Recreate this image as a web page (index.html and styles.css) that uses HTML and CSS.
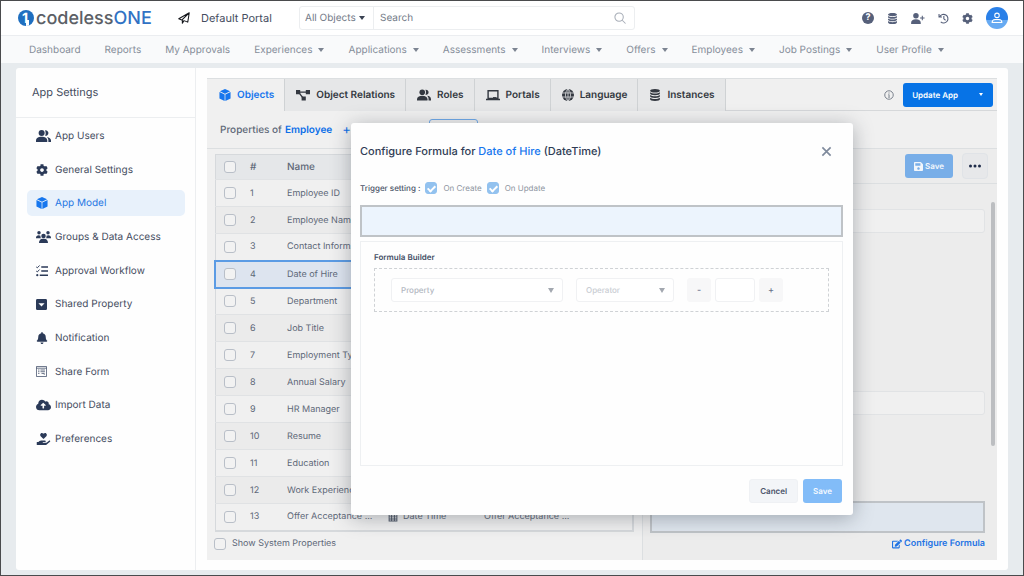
FILE: index.html
```html
<!DOCTYPE html>
<html lang="en">
<head>
    <meta charset="UTF-8">
    <meta name="viewport" content="width=device-width, initial-scale=1.0">
    <title>App Settings - Default Portal</title>
    <link rel="stylesheet" href="styles.css">
</head>
<body>
    <!-- Icon sprite -->
    <svg class="sprite" aria-hidden="true">
        <symbol id="i-users" viewBox="0 0 20 16">
            <circle cx="7.5" cy="4" r="4"/>
            <path d="M0 16v-2c0-3 3-5 7.500-5s7.500 2 7.500 5v2z"/>
            <path d="M12 .5a3.700 3.700 0 1 1 0 7.200c1.200-2 1.200-5 0-7.200zM14.500 9.200c3.300.3 5.500 2.200 5.500 4.800v2h-3.500v-2c0-2-.7-3.500-2-4.800z"/>
        </symbol>
        <symbol id="i-cog" viewBox="0 0 512 512"><path d="M487.4 315.7l-42.6-24.6c4.3-23.2 4.3-47 0-70.2l42.6-24.6c4.9-2.8 7.1-8.6 5.5-14-11.1-35.6-30-67.8-54.7-94.6-3.8-4.1-10-5.1-14.8-2.3L380.8 110c-17.9-15.4-38.5-27.3-60.8-35.1V25.800c0-5.600-3.900-10.500-9.400-11.700-36.7-8.200-74.300-7.800-109.200 0-5.500 1.200-9.400 6.100-9.400 11.700V75c-22.200 7.900-42.800 19.800-60.800 35.100L88.700 85.500c-4.900-2.800-11-1.900-14.800 2.300-24.700 26.700-43.600 58.900-54.700 94.600-1.700 5.400.6 11.200 5.500 14L67.300 221c-4.300 23.200-4.300 47 0 70.200l-42.600 24.600c-4.900 2.800-7.100 8.600-5.500 14 11.100 35.600 30 67.800 54.700 94.600 3.800 4.100 10 5.100 14.800 2.300l42.600-24.600c17.900 15.400 38.500 27.300 60.800 35.100v49.200c0 5.600 3.900 10.500 9.400 11.700 36.700 8.200 74.300 7.800 109.200 0 5.500-1.200 9.400-6.100 9.400-11.700v-49.200c22.200-7.900 42.800-19.800 60.800-35.100l42.600 24.600c4.900 2.800 11 1.900 14.800-2.300 24.700-26.700 43.600-58.900 54.700-94.600 1.500-5.500-.7-11.300-5.600-14.100zM256 336c-44.100 0-80-35.900-80-80s35.900-80 80-80 80 35.900 80 80-35.900 80-80 80z"/></symbol>
        <symbol id="i-cube" viewBox="0 0 16 16"><path d="M8 0l6.800 3L8 6.300 1.200 3zM.6 4l6.900 3.300V16L.6 12.500zM15.400 4L8.500 7.300V16l6.900-3.500z"/></symbol>
        <symbol id="i-group" viewBox="0 0 20 16">
            <circle cx="4" cy="2.300" r="2.300"/><circle cx="16" cy="2.300" r="2.300"/><circle cx="10" cy="6.500" r="3"/>
            <path d="M0 9c0-2 1.500-3.500 3.500-3.500 1 0 2 .3 2.500.8-.3 1.200 0 2.200.6 3.200H0zM20 9c0-2-1.500-3.500-3.500-3.500-1 0-2 .3-2.500.8.3 1.200 0 2.200-.6 3.200H20zM4 16c0-3.500 2-5.700 4.500-5.700h3c2.500 0 4.500 2.200 4.500 5.700z"/>
        </symbol>
        <symbol id="i-tasks" viewBox="0 0 16 16">
            <path d="M7 1.500h9v2H7zM7 7h9v2H7zM5 12.500h11v2H5z"/>
            <circle cx="1.700" cy="13.500" r="1.500"/>
            <path d="M.3 2.500l1.400 1.300L4.800.6M.3 8l1.400 1.300L4.800 6" fill="none" stroke="currentColor" stroke-width="1.300"/>
        </symbol>
        <symbol id="i-shared" viewBox="0 0 16 16"><path fill-rule="evenodd" d="M2 0h12a2 2 0 0 1 2 2v12a2 2 0 0 1-2 2H2a2 2 0 0 1-2-2V2a2 2 0 0 1 2-2zm1.500 6L8 11l4.500-5z"/></symbol>
        <symbol id="i-bell" viewBox="0 0 448 512"><path d="M224 512c35.320 0 63.970-28.650 63.970-64H160.030c0 35.350 28.650 64 63.970 64zm215.390-149.710c-19.320-20.760-55.470-51.990-55.470-154.290 0-77.700-54.480-139.900-127.940-155.160V32c0-17.670-14.320-32-31.980-32s-31.980 14.330-31.980 32v20.840C118.560 68.100 64.080 130.300 64.080 208c0 102.300-36.150 133.530-55.470 154.290-6 6.450-8.660 14.160-8.610 21.710.11 16.400 12.980 32 32.100 32h383.800c19.120 0 32-15.600 32.100-32 .05-7.550-2.610-15.270-8.610-21.710z"/></symbol>
        <symbol id="i-form" viewBox="0 0 16 16">
            <path d="M.7.7h14.600v14.600H.7zM.7 3.200h14.600M3 5.800h2M6.500 5.800H13M3 8.300h2M6.500 8.300H13M3 10.800h2M8 10.800h4v2" fill="none" stroke="currentColor" stroke-width="1"/>
        </symbol>
        <symbol id="i-cloud" viewBox="0 0 640 512"><path d="M537.600 226.600c4.100-10.700 6.400-22.400 6.400-34.600 0-53-43-96-96-96-19.700 0-38.100 6-53.300 16.200C367 64.200 315.300 32 256 32c-88.400 0-160 71.600-160 160 0 2.700.1 5.400.2 8.100C40.200 219.800 0 273.200 0 336c0 79.500 64.500 144 144 144h368c70.700 0 128-57.300 128-128 0-61.900-44-113.600-102.400-125.400zM393.400 288H345v96c0 8.800-7.200 16-16 16h-36c-8.800 0-16-7.200-16-16v-96h-64c-14.300 0-21.400-17.200-11.300-27.300l95-95c6.200-6.200 16.400-6.200 22.600 0l95 95c10.100 10.100 2.900 27.300-11.300 27.300z"/></symbol>
        <symbol id="i-hand" viewBox="0 0 576 512"><path d="M275.300 250.500c7 7.400 18.400 7.400 25.500 0l108.900-114.200c31.600-33.200 29.800-88.200-5.600-118.800-30.800-26.700-76.700-21.900-104.900 7.700L288 36.900l-11.100-11.600C248.700-4.400 202.800-9.200 172 17.500c-35.300 30.600-37.200 85.600-5.600 118.800l108.900 114.200zm290 77.600c-11.800-10.700-30.200-10-42.600 0L430.300 402c-11.300 9.100-25.400 14-40 14H272c-8.800 0-16-7.200-16-16s7.200-16 16-16h78.300c15.900 0 30.700-10.900 33.300-26.600 3.300-20-12.100-37.400-31.600-37.400H192c-27 0-53.100 9.300-74.100 26.300L71.400 384H16c-8.800 0-16 7.200-16 16v96c0 8.800 7.200 16 16 16h356.800c14.500 0 28.600-4.900 40-14L564 377c15.200-12.100 16.400-35.300 1.300-48.900z"/></symbol>
        <symbol id="i-plane" viewBox="0 0 16 16"><path d="M15 1L1 9l4 1.700L15 1l-2 12.500-5-2L5.800 15v-4.300" fill="none" stroke="currentColor" stroke-width="1.400" stroke-linejoin="round"/></symbol>
        <symbol id="i-search" viewBox="0 0 16 16"><path d="M11 11l4 4M6.800 1.200a5.600 5.600 0 1 0 0 11.200 5.600 5.600 0 0 0 0-11.200z" fill="none" stroke="currentColor" stroke-width="1.400" stroke-linecap="round"/></symbol>
        <symbol id="i-database" viewBox="0 0 16 16"><path d="M8 0c4 0 6.500 1 6.500 2.300S12 4.700 8 4.700 1.500 3.600 1.500 2.300 4 0 8 0zM1.500 4.300C3 5.400 5.200 5.900 8 5.900s5-.5 6.500-1.600v1.800C14.500 7.300 12 8.400 8 8.400S1.500 7.300 1.500 6.100zM1.500 8C3 9.100 5.200 9.600 8 9.600s5-.5 6.500-1.600v1.800c0 1.200-2.500 2.300-6.500 2.300s-6.500-1.100-6.500-2.300zM1.500 11.700c1.500 1.100 3.700 1.600 6.500 1.600s5-.5 6.500-1.600v2c0 1.300-2.500 2.300-6.500 2.300s-6.500-1-6.500-2.300z"/></symbol>
        <symbol id="i-user-plus" viewBox="0 0 20 16"><circle cx="7" cy="4" r="4"/><path d="M0 16v-2c0-3 2.500-5 7-5s7 2 7 5v2zM15.500 4h1.500v2.500h2.500V8H17v2.500h-1.500V8H13V6.500h2.500z"/></symbol>
        <symbol id="i-history" viewBox="0 0 16 16"><path d="M2.500 5.500A6.300 6.300 0 1 1 4 13M1.500 1.500v4.300h4.300M8.500 4.500V8.500l2.500 2" fill="none" stroke="currentColor" stroke-width="1.600"/></symbol>
        <symbol id="i-user" viewBox="0 0 16 16"><path d="M8 1.500a3 3 0 1 0 0 6 3 3 0 0 0 0-6zM1.500 14c0-2.500 2-4 4-4h5c2 0 4 1.500 4 4z" fill="none" stroke="currentColor" stroke-width="1.400" stroke-linejoin="round"/></symbol>
        <symbol id="i-relations" viewBox="0 0 20 16"><path d="M0 1h6v6H0zM14 1h6v6h-6zM8 10h6v6H8z"/><path d="M5 4h10M4.500 5l6 8" fill="none" stroke="currentColor" stroke-width="1.800"/></symbol>
        <symbol id="i-portal" viewBox="0 0 20 16"><path d="M3 2h14v11H3zM0 14.500h20" fill="none" stroke="currentColor" stroke-width="2"/><path d="M10 11h5v3h-5z"/></symbol>
        <symbol id="i-globe" viewBox="0 0 16 16"><circle cx="8" cy="8" r="8"/><path d="M0 5.300h16M0 10.700h16M8 0v16M8 0C3.500 4 3.500 12 8 16M8 0c4.500 4 4.500 12 0 16" fill="none" class="globe-lines"/></symbol>
        <symbol id="i-info" viewBox="0 0 16 16"><circle cx="8" cy="8" r="6.800" fill="none" stroke="currentColor" stroke-width="1.400"/><path d="M7.200 4h1.600v1.600H7.200zM6.500 7h2.300v4h.8v1H6.500v-1h.8V8h-.8z"/></symbol>
        <symbol id="i-save" viewBox="0 32 448 448"><path d="M433.941 129.941l-83.882-83.882A48 48 0 0 0 316.118 32H48C21.490 32 0 53.490 0 80v352c0 26.510 21.490 48 48 48h352c26.510 0 48-21.490 48-48V163.882a48 48 0 0 0-14.059-33.941zM224 416c-35.346 0-64-28.654-64-64 0-35.346 28.654-64 64-64s64 28.654 64 64c0 35.346-28.654 64-64 64zm96-304.520V212c0 6.627-5.373 12-12 12H76c-6.627 0-12-5.373-12-12V108c0-6.627 5.373-12 12-12h228.520c3.183 0 6.235 1.264 8.485 3.515l3.480 3.480A11.996 11.996 0 0 1 320 111.480z"/></symbol>
        <symbol id="i-edit" viewBox="0 0 576 512"><path d="M402.600 83.200l90.200 90.200c3.800 3.800 3.800 10 0 13.800L274.400 405.600l-92.800 10.300c-12.400 1.400-22.900-9.100-21.500-21.500l10.300-92.800L388.800 83.200c3.800-3.800 10-3.800 13.800 0zm162-22.900l-48.800-48.800c-15.200-15.200-39.900-15.200-55.200 0l-35.400 35.400c-3.800 3.800-3.800 10 0 13.800l90.200 90.200c3.800 3.800 10 3.800 13.800 0l35.400-35.400c15.200-15.300 15.200-40 0-55.200zM384 346.200V448H64V128h229.800c3.200 0 6.200-1.300 8.500-3.500l40-40c7.600-7.600 2.200-20.500-8.500-20.500H48C21.500 64 0 85.500 0 112v352c0 26.500 21.500 48 48 48h352c26.500 0 48-21.500 48-48V306.200c0-10.700-12.900-16-20.500-8.500l-40 40c-2.200 2.300-3.500 5.300-3.500 8.500z"/></symbol>
        <symbol id="i-dots" viewBox="0 0 16 16"><circle cx="2" cy="8" r="2"/><circle cx="8" cy="8" r="2"/><circle cx="14" cy="8" r="2"/></symbol>
        <symbol id="i-calendar" viewBox="0 0 16 16"><path fill-rule="evenodd" d="M1 1h14v14H1zM2.500 5v2.200H5V5zm4 0v2.200h3V5zM11 5v2.200h2.500V5zM2.500 8.500v2H5v-2zm4 0v2h3v-2zm4.500 0v2h2.500v-2zm-8.500 3.300v1.700H5v-1.700zm4 0v1.700h3v-1.700zm4.500 0v1.700h2.500v-1.700z"/></symbol>
        <symbol id="i-close" viewBox="0 0 16 16"><path d="M2 2l12 12M14 2L2 14" fill="none" stroke="currentColor" stroke-width="2.400"/></symbol>
    </svg>

    <header class="topbar">
        <a class="brand" href="#" aria-label="codelessONE">
            <svg class="brand-mark" viewBox="0 0 16 16">
                <defs><clipPath id="mark"><circle cx="8" cy="8" r="8"/></clipPath></defs>
                <g clip-path="url(#mark)">
                    <rect class="mark-bg" width="16" height="16"/>
                    <rect class="mark-stem" x="8" y="10" width="3" height="6"/>
                </g>
                <text class="mark-text" x="4" y="13">1</text>
            </svg>
            <span class="brand-name">codeless<b>ONE</b></span>
        </a>
        <a class="portal" href="#"><svg class="icon"><use href="#i-plane"/></svg>Default Portal</a>
        <form class="search">
            <select class="search-scope" aria-label="Search in"><option>All Objects</option></select>
            <input class="search-input" type="text" placeholder="Search" aria-label="Search">
            <button class="search-btn" type="button" aria-label="Search"><svg class="icon"><use href="#i-search"/></svg></button>
        </form>
        <div class="tools">
            <button class="tool help" type="button" aria-label="Help">?</button>
            <button class="tool" type="button" aria-label="Data"><svg class="icon"><use href="#i-database"/></svg></button>
            <button class="tool" type="button" aria-label="Invite user"><svg class="icon wide"><use href="#i-user-plus"/></svg></button>
            <button class="tool" type="button" aria-label="History"><svg class="icon"><use href="#i-history"/></svg></button>
            <button class="tool" type="button" aria-label="Settings"><svg class="icon"><use href="#i-cog"/></svg></button>
            <button class="avatar" type="button" aria-label="Account"><svg class="icon"><use href="#i-user"/></svg></button>
        </div>
    </header>

    <nav class="mainnav">
        <a href="#">Dashboard</a>
        <a href="#">Reports</a>
        <a href="#">My Approvals</a>
        <a href="#" class="has-menu">Experiences</a>
        <a href="#" class="has-menu">Applications</a>
        <a href="#" class="has-menu">Assessments</a>
        <a href="#" class="has-menu">Interviews</a>
        <a href="#" class="has-menu">Offers</a>
        <a href="#" class="has-menu">Employees</a>
        <a href="#" class="has-menu">Job Postings</a>
        <a href="#" class="has-menu">User Profile</a>
    </nav>

    <main class="card">
        <aside class="sidebar">
            <h2>App Settings</h2>
            <ul class="side-list">
                <li><a href="#"><svg class="icon wide"><use href="#i-users"/></svg>App Users</a></li>
                <li><a href="#"><svg class="icon"><use href="#i-cog"/></svg>General Settings</a></li>
                <li><a href="#" class="active"><svg class="icon"><use href="#i-cube"/></svg>App Model</a></li>
                <li><a href="#"><svg class="icon wide"><use href="#i-group"/></svg>Groups &amp; Data Access</a></li>
                <li><a href="#"><svg class="icon"><use href="#i-tasks"/></svg>Approval Workflow</a></li>
                <li><a href="#"><svg class="icon small"><use href="#i-shared"/></svg>Shared Property</a></li>
                <li><a href="#"><svg class="icon"><use href="#i-bell"/></svg>Notification</a></li>
                <li><a href="#"><svg class="icon small"><use href="#i-form"/></svg>Share Form</a></li>
                <li><a href="#"><svg class="icon wide"><use href="#i-cloud"/></svg>Import Data</a></li>
                <li><a href="#"><svg class="icon wide"><use href="#i-hand"/></svg>Preferences</a></li>
            </ul>
        </aside>

        <section class="panel">
            <div class="tabs">
                <button class="tab active" type="button"><svg class="icon"><use href="#i-cube"/></svg>Objects</button>
                <button class="tab" type="button"><svg class="icon wide"><use href="#i-relations"/></svg>Object Relations</button>
                <button class="tab" type="button"><svg class="icon wide"><use href="#i-users"/></svg>Roles</button>
                <button class="tab" type="button"><svg class="icon wide"><use href="#i-portal"/></svg>Portals</button>
                <button class="tab" type="button"><svg class="icon"><use href="#i-globe"/></svg>Language</button>
                <button class="tab" type="button"><svg class="icon"><use href="#i-database"/></svg>Instances</button>
                <div class="tab-actions">
                    <svg class="icon info"><use href="#i-info"/></svg>
                    <button class="btn-update" type="button">Update App</button>
                </div>
            </div>

            <div class="object-bar">
                <span>Properties of</span>
                <a href="#">Employee</a>
                <button class="add-btn" type="button" aria-label="Add property">+</button>
                <button class="object-btn" type="button" aria-label="Object view"></button>
            </div>

            <div class="split">
                <div class="properties">
                    <table>
                        <thead>
                            <tr><th class="c-check"><input type="checkbox" aria-label="Select all"></th><th class="c-num">#</th><th class="c-name">Name</th><th class="c-type"></th><th></th></tr>
                        </thead>
                        <tbody>
                            <tr><td><input type="checkbox" aria-label="Select 1"></td><td>1</td><td>Employee ID</td><td></td><td></td></tr>
                            <tr><td><input type="checkbox" aria-label="Select 2"></td><td>2</td><td>Employee Name</td><td></td><td></td></tr>
                            <tr><td><input type="checkbox" aria-label="Select 3"></td><td>3</td><td>Contact Inform...</td><td></td><td></td></tr>
                            <tr class="selected"><td><input type="checkbox" aria-label="Select 4"></td><td>4</td><td>Date of Hire</td><td></td><td></td></tr>
                            <tr><td><input type="checkbox" aria-label="Select 5"></td><td>5</td><td>Department</td><td></td><td></td></tr>
                            <tr><td><input type="checkbox" aria-label="Select 6"></td><td>6</td><td>Job Title</td><td></td><td></td></tr>
                            <tr><td><input type="checkbox" aria-label="Select 7"></td><td>7</td><td>Employment Type</td><td></td><td></td></tr>
                            <tr><td><input type="checkbox" aria-label="Select 8"></td><td>8</td><td>Annual Salary</td><td></td><td></td></tr>
                            <tr><td><input type="checkbox" aria-label="Select 9"></td><td>9</td><td>HR Manager</td><td></td><td></td></tr>
                            <tr><td><input type="checkbox" aria-label="Select 10"></td><td>10</td><td>Resume</td><td></td><td></td></tr>
                            <tr><td><input type="checkbox" aria-label="Select 11"></td><td>11</td><td>Education</td><td></td><td></td></tr>
                            <tr><td><input type="checkbox" aria-label="Select 12"></td><td>12</td><td>Work Experience</td><td></td><td></td></tr>
                            <tr><td><input type="checkbox" aria-label="Select 13"></td><td>13</td><td>Offer Acceptance ...</td><td><span class="type"><svg class="icon"><use href="#i-calendar"/></svg>Date Time</span></td><td>Offer Acceptance ...</td></tr>
                        </tbody>
                    </table>
                    <label class="system-toggle"><input type="checkbox">Show System Properties</label>
                </div>

                <div class="details">
                    <div class="details-head">
                        <button class="btn-save" type="button"><svg class="icon"><use href="#i-save"/></svg>Save</button>
                        <button class="btn-more" type="button" aria-label="More"><svg class="icon"><use href="#i-dots"/></svg></button>
                    </div>
                    <div class="details-body">
                        <div class="fields">
                            <input class="field" type="text" aria-label="Property name">
                            <input class="field" type="text" aria-label="Default value">
                            <div class="formula-end">
                                <textarea class="formula-box" aria-label="Formula"></textarea>
                                <a class="configure" href="#"><svg class="icon"><use href="#i-edit"/></svg>Configure Formula</a>
                            </div>
                        </div>
                        <div class="scroll-track"><div class="scroll-thumb"></div></div>
                    </div>
                </div>
            </div>

            <div class="overlay">
                <div class="modal" role="dialog" aria-labelledby="modal-title">
                    <div class="modal-head">
                        <h3 id="modal-title">Configure Formula for <span>Date of Hire</span> (DateTime)</h3>
                        <button class="close" type="button" aria-label="Close"><svg class="icon"><use href="#i-close"/></svg></button>
                    </div>
                    <div class="trigger">
                        <span class="trigger-title">Trigger setting :</span>
                        <label><input type="checkbox" checked>On Create</label>
                        <label><input type="checkbox" checked>On Update</label>
                    </div>
                    <textarea class="formula-box" aria-label="Formula expression"></textarea>
                    <div class="builder">
                        <h4>Formula Builder</h4>
                        <div class="builder-row">
                            <select class="pick pick-property" aria-label="Property"><option>Property</option></select>
                            <select class="pick pick-operator" aria-label="Operator"><option>Operator</option></select>
                            <div class="stepper">
                                <button type="button">-</button>
                                <input type="text" aria-label="Value">
                                <button type="button">+</button>
                            </div>
                        </div>
                    </div>
                    <div class="modal-foot">
                        <button class="btn-cancel" type="button">Cancel</button>
                        <button class="btn-primary" type="button">Save</button>
                    </div>
                </div>
            </div>
        </section>
    </main>
</body>
</html>
```
FILE: styles.css
```css
:root {
    --blue: #0d6fe8;
    --blue-soft: #78aee8;
    --navy: #2b3a58;
    --text: #5e6878;
    --muted: #868e9a;
    --line: #dcdfe1;
    --page: #e7ebee;
    --panel: #f0f0f0;
}
* { margin: 0; padding: 0; box-sizing: border-box; font-family: Inter, sans-serif; }
body { min-height: 100vh; display: flex; flex-direction: column; border: 1px solid #4a4b4d; background: var(--page); color: var(--text); font-size: 10px; text-rendering: geometricPrecision; }
a { color: inherit; text-decoration: none; }
button, input, select { text-rendering: inherit; }
button { border: none; background: none; color: inherit; cursor: pointer; }
.sprite { display: none; }
.icon { width: 12px; height: 12px; fill: currentColor; flex: none; }
.icon.wide { width: 15px; }
.globe-lines { stroke: #e6e7e8; stroke-width: 1; }

/* Top bar */
.topbar { height: 35px; display: flex; align-items: center; padding: 0 15px 0 17px; background: #fff; border-bottom: 1px solid #ebedf0; }
.brand { display: flex; align-items: center; gap: 2px; width: 160px; }
.brand-mark { width: 16px; height: 16px; }
.mark-bg { fill: #1f6fc0; }
.mark-stem { fill: #fff; }
.mark-text { fill: #fff; font-size: 14px; font-weight: 700; }
.brand-name { font-size: 18px; font-weight: 500; color: #5c5f66; }
.brand-name b { font-weight: 500; color: #3172c4; }
.portal { display: flex; align-items: center; gap: 11px; width: 121px; font-size: 11px; color: #454d5e; white-space: nowrap; }
.portal .icon { color: #16181d; }
.search { display: flex; align-items: center; height: 24px; width: 336px; border: 1px solid #eceef0; border-radius: 3px; }
.search-scope { appearance: none; height: 22px; width: 74px; padding-left: 5px; border: none; border-right: 1px solid #eceef0; background: url("data:image/svg+xml,%3Csvg xmlns='http://www.w3.org/2000/svg' width='6' height='4'%3E%3Cpath d='M0 0h6L3 4z' fill='%233a4252'/%3E%3C/svg%3E") no-repeat right 8px center; color: #737b88; font-size: 10px; }
.search-input { flex: 1; min-width: 0; padding-left: 6px; border: none; font-size: 10px; }
.search-input::placeholder { color: #737b88; }
.search-btn { padding: 0 8px; color: #a8aeb8; line-height: 0; }
.tools { margin-left: auto; display: flex; align-items: center; gap: 13px; color: #56607a; }
.tool { line-height: 0; }
.tool .icon { width: 11px; height: 11px; }
.tool .icon.wide { width: 14px; }
.help { width: 12px; height: 12px; border-radius: 50%; background: #56607a; color: #fff; font-size: 9px; font-weight: 700; line-height: 12px; }
.avatar { width: 22px; height: 22px; border-radius: 50%; background: linear-gradient(#2a80e8 60%, #67aaf2 60%); color: #fff; line-height: 0; }

/* Main navigation */
.mainnav { height: 27px; display: flex; align-items: center; gap: 24px; padding-left: 28px; background: #f9fafb; color: var(--muted); white-space: nowrap; }
.has-menu::after { content: ""; display: inline-block; margin-left: 6px; border: 3px solid transparent; border-top: 4px solid #7c8491; border-bottom: 0; vertical-align: 1px; }

.card { flex: 1; display: flex; margin: 5px 15px; background: #fefefe; border-radius: 3px; }

/* Sidebar */
.sidebar { width: 180px; flex: none; border-right: 1px solid #eceef0; }
.sidebar h2 { height: 50px; padding-left: 16px; border-bottom: 1px solid #eceef0; font-size: 11px; font-weight: 400; line-height: 49px; color: #454d5e; }
.side-list { list-style: none; min-height: 339px; padding: 5px 10px 5px 11px; display: flex; flex-direction: column; justify-content: space-between; }
.side-list a { display: flex; align-items: center; height: 26px; padding-left: 9px; border-radius: 5px; font-size: 10px; color: #454d5e; }
.side-list .icon { margin-right: 7px; color: var(--navy); }
.side-list .icon.wide { margin-right: 4px; }
.side-list .icon.small { width: 11px; height: 11px; margin-right: 8px; }
.side-list .active { background: #e8f1fb; color: #2677e3; }
.side-list .active .icon { color: #1676ee; }

/* Content panel */
.panel { position: relative; flex: 1; min-width: 0; display: flex; flex-direction: column; margin: 10px 11px; background: var(--panel); }
.tabs { display: flex; height: 33px; border-top: 1px solid var(--line); border-bottom: 1px solid #d6d8da; }
.tab { display: flex; align-items: center; gap: 6px; height: 32px; padding: 0 10px 0 11px; background: #e6e7e8; border-right: 1px solid #cfd2d4; font-size: 10px; font-weight: 600; color: #333840; white-space: nowrap; }
.tab.active { padding-left: 12px; background: var(--panel); color: #1676ee; }
.tab .icon.wide { width: 14px; }
.tab-actions { margin-left: auto; display: flex; align-items: center; gap: 9px; padding-right: 4px; }
.info { width: 10px; height: 10px; color: #6b7480; }
.btn-update { display: flex; align-items: center; height: 24px; padding: 0 10px 0 9px; border-radius: 3px; background: #0773e6; color: #fff; font-size: 8px; font-weight: 600; }
.btn-update::after { content: ""; margin-left: 21px; border: 2px solid transparent; border-top: 3px solid #fff; border-bottom: 0; }
.object-bar { display: flex; align-items: center; gap: 3px; height: 38px; padding-left: 13px; border-bottom: 1px solid var(--line); font-weight: 500; }
.object-bar a { color: var(--blue); font-weight: 600; }
.add-btn { margin-left: 7px; color: var(--blue); font-size: 13px; }
.object-btn { width: 49px; height: 22px; margin-left: 75px; border: 1px solid #6fa9e8; border-radius: 3px; }
.split { flex: 1; display: flex; }

/* Property table */
.properties { width: 55%; flex: none; padding: 5px 8px 0 7px; font-size: 9px; }
table { width: 100%; table-layout: fixed; border-collapse: collapse; border: 1px solid #d6d9dc; border-right-width: 2px; border-bottom-width: 2px; }
th { height: 25px; background: #e5e7e9; font-size: 10px; font-weight: 500; text-align: left; }
td { height: 27px; border-top: 1px solid #e0e2e4; white-space: nowrap; overflow: hidden; }
tbody tr:nth-child(even) { background: #ebebeb; }
tbody tr.selected { background: #dde4ef; border: 2px solid #5b9be4; }
tr.selected td { border-top: 2px solid #5b9be4; }
th:first-child, td:first-child { padding-left: 8px; }
.c-check { width: 35px; }
.c-num { width: 37px; }
.c-name { width: 101px; }
.c-type { width: 96px; }
.type { display: flex; align-items: center; gap: 5px; }
.type .icon { width: 10px; height: 10px; color: #4d5666; }
input[type="checkbox"] { appearance: none; display: block; flex: none; width: 12px; height: 12px; border: 1px solid #b9bfc8; border-radius: 3px; background: #f2f2f2; }
.system-toggle { display: flex; align-items: center; gap: 6px; padding-top: 6px; }

/* Property details */
.details { flex: 1; display: flex; flex-direction: column; border-left: 1px solid var(--line); background: #ececec; }
.details-head { display: flex; justify-content: flex-end; align-items: center; gap: 9px; height: 35px; padding-right: 9px; border-bottom: 1px solid var(--line); }
.btn-save { display: flex; align-items: center; gap: 2px; height: 24px; padding: 0 9px; border-radius: 3px; background: var(--blue-soft); color: #f2f6fb; font-size: 8px; font-weight: 600; }
.btn-save .icon { width: 9px; height: 9px; }
.btn-more { width: 26px; height: 26px; border: 1px solid #e0e3e7; border-radius: 4px; background: #e7e8ea; color: #1f2c4a; line-height: 0; }
.details-body { flex: 1; display: flex; gap: 6px; padding: 18px 2px 0 7px; }
.fields { flex: 1; display: flex; flex-direction: column; justify-content: space-between; padding: 7px 0 11px; }
.field { width: 100%; height: 24px; border: 1px solid #e1e3e5; border-radius: 3px; background: var(--panel); }
.field:first-child { margin-bottom: 72px; }
.formula-box { display: block; width: 100%; height: 32px; border: 2px solid #bfc3c7; background: #dfe6ee; resize: none; }
.formula-end { display: flex; flex-direction: column; gap: 5px; align-items: flex-end; }
.configure { display: flex; align-items: center; gap: 2px; color: #1f74e4; font-size: 9px; font-weight: 600; }
.configure .icon { width: 10px; height: 10px; }
.scroll-track { width: 4px; }
.scroll-thumb { height: 244px; border-radius: 2px; background: #bcbec1; }

/* Formula modal */
.overlay { position: absolute; inset: 0; display: flex; justify-content: center; align-items: flex-start; padding-top: 45px; }
.modal { width: 502px; padding: 0 10px 12px 9px; border-radius: 3px; background: #fefefe; box-shadow: 0 3px 20px rgba(40, 50, 60, 0.35); }
.modal-head { display: flex; align-items: center; justify-content: space-between; height: 56px; }
.modal-head h3 { font-size: 11px; font-weight: 500; color: #2f3c55; }
.modal-head span { color: #1676ee; }
.close { padding: 0 11px; color: #7f8a9c; line-height: 0; }
.close .icon { width: 11px; height: 11px; }
.trigger { display: flex; align-items: center; gap: 5px; height: 17px; font-size: 8px; color: #8d94a0; }
.trigger-title { font-weight: 500; color: #4a5468; }
.trigger label { display: flex; align-items: center; gap: 6px; }
.trigger input[type="checkbox"]:checked { border-color: #93c2ef; background: #93c2ef; }
.trigger input:checked::after { content: ""; display: block; width: 3px; height: 6px; margin: 1px 0 0 3px; border: solid #fff; border-width: 0 2px 2px 0; transform: rotate(45deg); }
.modal .formula-box { margin-top: 9px; background: #ecf4fd; }
.builder { min-height: 225px; margin-top: 4px; padding: 9px 13px; border: 1px solid #eef0f2; }
.builder h4 { font-size: 8px; font-weight: 600; line-height: 12px; color: #454f66; }
.builder-row { display: flex; align-items: center; gap: 13px; height: 44px; margin-top: 5px; padding-left: 16px; border: 1px dashed #cfd2d5; }
.pick { appearance: none; height: 24px; padding: 0 9px; border: 1px solid #f0f1f3; border-radius: 3px; background: #fff url("data:image/svg+xml,%3Csvg xmlns='http://www.w3.org/2000/svg' width='6' height='5'%3E%3Cpath d='M0 0h6L3 5z' fill='%23a3a8b0'/%3E%3C/svg%3E") no-repeat right 8px center; color: #b2b7bf; font-size: 8px; font-weight: 500; }
.pick-property { width: 172px; }
.pick-operator { width: 98px; color: #c9cdd3; }
.stepper { display: flex; gap: 4px; }
.stepper button { width: 24px; height: 24px; border-radius: 3px; background: #f7f7f8; color: #68728a; font-size: 9px; font-weight: 500; }
.stepper input { width: 40px; height: 24px; border: 1px solid #f0f1f3; border-radius: 3px; }
.modal-foot { display: flex; justify-content: flex-end; gap: 5px; padding: 13px 1px 0 0; }
.btn-cancel, .btn-primary { height: 24px; padding: 0 10px; border-radius: 3px; font-size: 8px; font-weight: 600; }
.btn-cancel { border: 1px solid #eff1f4; background: #f3f5f8; color: #4a536a; }
.btn-primary { background: #82bcf8; color: #f4f9ff; }
```
